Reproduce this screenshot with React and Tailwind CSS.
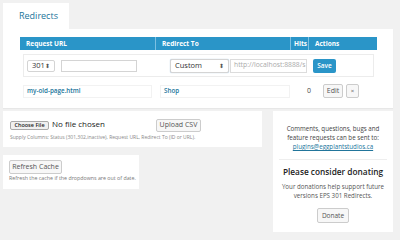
function SelectBox({ label, className }) {
  return (
    <div className={`flex items-center justify-between bg-white border border-[#d4d4d4] rounded-[2px] px-[4px] text-[7.5px] text-[#333] ${className}`}>
      <span>{label}</span>
      <span className="text-[6px] leading-none text-[#555]">⬍</span>
    </div>
  )
}

function SmallButton({ children, className }) {
  return (
    <div className={`flex items-center justify-center bg-[#f7f7f7] border border-[#cccccc] rounded-[2px] text-[#555] ${className}`}>
      {children}
    </div>
  )
}

export default function App() {
  return (
    <div className="w-[400px] h-[240px] bg-[#f1f1f1] pl-[3px] pt-[3px] overflow-hidden" style={{ fontFamily: '"Open Sans", "Noto Sans", sans-serif' }}>
      {/* tab */}
      <div className="w-[66px] h-[26px] bg-white flex items-center pl-[16px] text-[9px] text-[#21759b]">
        Redirects
      </div>

      {/* main panel */}
      <div className="w-[390px] h-[79px] bg-white pl-[17px] pt-[8px] shadow-[0_1px_1px_rgba(0,0,0,0.04)]">
        <div className="flex w-[357px] h-[13px] bg-[#2a95c8] text-white text-[6.5px] font-bold">
          <div className="w-[136px] pl-[6px] flex items-center border-r border-[#7cc0e2]">Request URL</div>
          <div className="w-[135px] pl-[6px] flex items-center border-r border-[#7cc0e2]">Redirect To</div>
          <div className="w-[18px] pl-[3px] flex items-center border-r border-[#7cc0e2]">Hits</div>
          <div className="flex-1 pl-[6px] flex items-center">Actions</div>
        </div>

        <div className="mt-[4px] ml-[3px] w-[351px] h-[23px] border border-[#ececec] flex items-center">
          <SelectBox label="301" className="ml-[3px] w-[28px] h-[12px]" />
          <div className="ml-[6px] w-[76px] h-[12px] border border-[#d4d4d4] bg-white" />
          <SelectBox label="Custom" className="ml-[33px] w-[59px] h-[14px] border-[#8fb4d8] shadow-[0_0_1px_#8fb4d8]" />
          <div className="ml-[1px] w-[77px] h-[14px] border border-[#dcdcdc] bg-white flex items-center pl-[3px] text-[6.8px] text-[#aaa] overflow-hidden whitespace-nowrap">
            http://localhost:8888/s
          </div>
          <div className="ml-[6px] w-[23px] h-[14px] bg-[#2a95c8] rounded-[2px] text-white text-[6.5px] font-semibold flex items-center justify-center">
            Save
          </div>
        </div>

        <div className="mt-[7px] ml-[3px] h-[14px] flex items-center">
          <div className="w-[129px] h-[13px] border border-[#f2f2f2] flex items-center pl-[3px] text-[6.3px] font-semibold text-[#21759b]">
            my-old-page.html
          </div>
          <div className="ml-[8px] w-[130px] h-[13px] border border-[#f2f2f2] flex items-center pl-[3px] text-[6.3px] font-semibold text-[#21759b]">
            Shop
          </div>
          <div className="w-[21px] text-right text-[7px] text-[#444]">0</div>
          <SmallButton className="ml-[12px] w-[20px] h-[14px] text-[7px]">Edit</SmallButton>
          <SmallButton className="ml-[3px] w-[13px] h-[14px] text-[6px]">×</SmallButton>
        </div>
      </div>

      <div className="flex mt-[3px]">
        <div className="flex flex-col">
          {/* upload panel */}
          <div className="w-[259px] h-[36px] bg-white pl-[7px] pt-[8px]">
            <div className="flex items-center h-[13px]">
              <div className="w-[39px] h-[9px] bg-[#f0f0f0] border border-[#a9a9a9] rounded-[2px] flex items-center justify-center text-[5.5px] font-semibold text-[#222]">
                Choose File
              </div>
              <span className="ml-[3px] text-[8px] text-[#222] self-start -mt-[1px]">No file chosen</span>
              <SmallButton className="ml-[51px] w-[45px] h-[13px] text-[7px]">Upload CSV</SmallButton>
            </div>
            <div className="mt-[2px] text-[5px] text-[#888] whitespace-nowrap">
              Supply Columns: Status (301,302,inactive), Request URL, Redirect To (ID or URL).
            </div>
          </div>

          {/* refresh panel */}
          <div className="mt-[8px] w-[136px] h-[34px] bg-white pl-[6px] pt-[5px]">
            <SmallButton className="w-[53px] h-[14px] text-[7px]">Refresh Cache</SmallButton>
            <div className="mt-[1px] text-[5.3px] text-[#777] whitespace-nowrap">
              Refresh the cache if the dropdowns are out of date.
            </div>
          </div>
        </div>

        {/* right panel */}
        <div className="ml-[11px] w-[120px] h-[121px] bg-white px-[4px] pt-[13px] flex flex-col items-center text-center">
          <div className="text-[6.2px] leading-[9px] text-[#444] whitespace-nowrap">
            Comments, questions, bugs and<br />
            feature requests can be sent to:<br />
            <span className="text-[#21759b] underline">plugins@eggplantstudios.ca</span>
          </div>
          <div className="w-[108px] mt-[8px] border-t border-[#eeeeee]" />
          <div className="mt-[6px] text-[8.3px] font-semibold text-[#222] whitespace-nowrap">Please consider donating</div>
          <div className="mt-[4px] text-[6.2px] leading-[9px] text-[#555] whitespace-nowrap">
            Your donations help support future<br />
            versions EPS 301 Redirects.
          </div>
          <SmallButton className="mt-[8px] w-[32px] h-[15px] text-[6.5px]">Donate</SmallButton>
        </div>
      </div>
    </div>
  )
}
